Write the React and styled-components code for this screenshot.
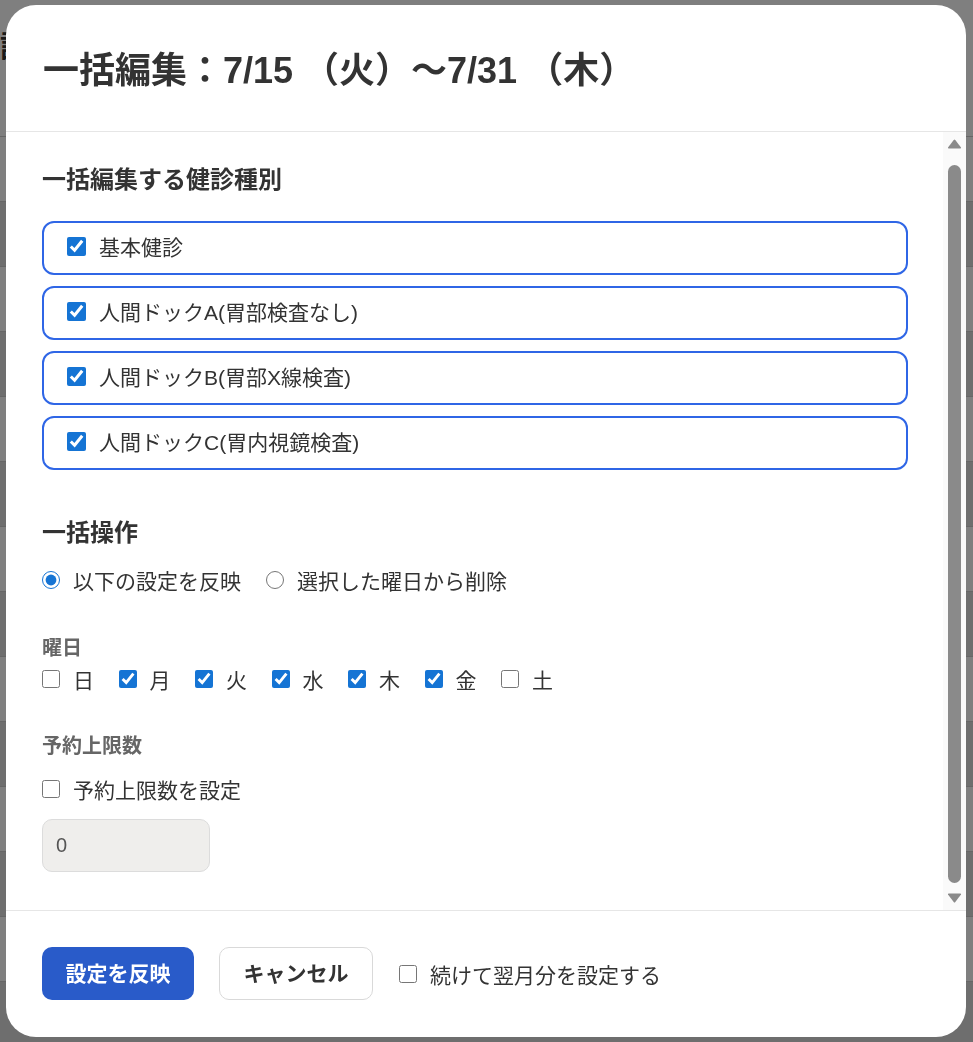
import React, { useState } from "react"
import styled, { createGlobalStyle } from "styled-components"

const GlobalStyle = createGlobalStyle`
  html, body {
    margin: 0;
    height: 100%;
  }
  body {
    font-family: "Liberation Sans", "Noto Sans CJK JP", sans-serif;
    color: #333;
    background: #fff;
  }
`

// ---- page behind the dialog ----
const BgPage = styled.div`
  padding: 22px 0 0 0;
`

const BgTitle = styled.h2`
  margin: 0 0 70px 0;
  font-size: 30px;
  font-weight: 700;
`

const BgRow = styled.div`
  display: flex;
  height: 64px;
  align-items: center;
  border-top: 1px solid #ccc;
  background: ${(p) => (p.shade ? "#dcdcdc" : "#fff")};
  font-size: 20px;
  gap: 20px;
  padding-left: 4px;
`

// ---- dialog ----
const Overlay = styled.div`
  position: fixed;
  inset: 0;
  background: rgba(0, 0, 0, 0.5);
  display: flex;
  align-items: flex-start;
  padding: 5px 7px 5px 6px;
  box-sizing: border-box;
`

const Modal = styled.div`
  width: 960px;
  height: 1032px;
  background: #fff;
  border-radius: 30px;
  display: flex;
  flex-direction: column;
  overflow: hidden;
`

const Header = styled.div`
  height: 127px;
  flex-shrink: 0;
  box-sizing: border-box;
  border-bottom: 1px solid #e6e6e6;
  display: flex;
  align-items: center;
  padding: 0 0 3px 37px;
`

const Title = styled.h1`
  margin: 0;
  font-size: 36px;
  font-weight: 700;
  color: #333;
`

const Middle = styled.div`
  flex: 1;
  min-height: 0;
  display: flex;
`

const Body = styled.div`
  flex: 1;
  overflow-y: auto;
  scrollbar-width: none;
  padding: 33px 35px 56px 36px;
`

const ScrollTrack = styled.div`
  width: 23px;
  flex-shrink: 0;
  background: #fafafa;
  display: flex;
  flex-direction: column;
  align-items: center;
  padding: 7px 0;
  box-sizing: border-box;
`

const Thumb = styled.div`
  width: 13px;
  flex: 1;
  margin: 16px 0 10px;
  border-radius: 7px;
  background: #8a8a8a;
`

const SectionTitle = styled.h3`
  margin: ${(p) => p.top || 0}px 0 0 0;
  font-size: 24px;
  line-height: 30px;
  font-weight: 700;
  color: #333;
`

const SubLabel = styled.div`
  margin-top: ${(p) => p.top || 0}px;
  font-size: 20px;
  line-height: 26px;
  font-weight: 700;
  color: #666;
`

const CardList = styled.div`
  margin-top: 26px;
  display: flex;
  flex-direction: column;
  gap: 11px;
`

const Card = styled.label`
  display: flex;
  align-items: center;
  gap: 13px;
  height: 54px;
  box-sizing: border-box;
  border: 2px solid #2f66e6;
  border-radius: 12px;
  padding: 0 0 4px 23px;
  font-size: 21px;
  color: #333;
  cursor: pointer;
`

const Check = styled.input.attrs({ type: "checkbox" })`
  margin: 0;
  width: ${(p) => p.size || 18}px;
  height: ${(p) => p.size || 18}px;
  accent-color: #1574d4;
  flex-shrink: 0;
`

const Radio = styled.input.attrs({ type: "radio" })`
  margin: 0;
  width: 18px;
  height: 18px;
  accent-color: #1574d4;
  flex-shrink: 0;
`

const OptionRow = styled.div`
  margin-top: ${(p) => p.top || 0}px;
  display: flex;
  align-items: center;
  gap: ${(p) => p.gap || 25}px;
  height: ${(p) => p.h || 30}px;
`

const Option = styled.label`
  display: flex;
  align-items: center;
  gap: 13px;
  font-size: 21px;
  color: #333;
  cursor: pointer;
`

const LimitInput = styled.input`
  display: block;
  margin-top: 15px;
  width: 168px;
  height: 53px;
  box-sizing: border-box;
  border: 1px solid #dcdcdc;
  border-radius: 10px;
  background: #efeeec;
  padding: 0 13px;
  font-family: inherit;
  font-size: 20px;
  color: #555;
  outline: none;
`

const Footer = styled.div`
  height: 127px;
  flex-shrink: 0;
  box-sizing: border-box;
  border-top: 1px solid #e6e6e6;
  display: flex;
  align-items: flex-start;
  padding: 36px 0 0 36px;
  gap: 25px;
`

const Button = styled.button`
  height: 53px;
  width: ${(p) => p.w}px;
  border-radius: 10px;
  font-family: inherit;
  font-size: 21px;
  font-weight: 700;
  padding: 0 0 3px;
  cursor: pointer;
  border: ${(p) => (p.primary ? "none" : "1px solid #d9d9d9")};
  background: ${(p) => (p.primary ? "#295bc9" : "#fff")};
  color: ${(p) => (p.primary ? "#fff" : "#333")};
`

const FooterCheck = styled(Option)`
  height: 53px;
  margin-left: 1px;
  padding-bottom: 3px;
`

const Arrow = ({ down }) => (
  <svg width="15" height="10" viewBox="0 0 15 10">
    <path
      d={down ? "M1 1.5 Q0.5 0.5 2 0.5 H13 Q14.5 0.5 14 1.5 L8.3 9 Q7.5 10 6.7 9 Z" : "M1 8.5 Q0.5 9.5 2 9.5 H13 Q14.5 9.5 14 8.5 L8.3 1 Q7.5 0 6.7 1 Z"}
      fill="#8a8a8a"
    />
  </svg>
)

const courses = [
  "基本健診",
  "人間ドックA(胃部検査なし)",
  "人間ドックB(胃部X線検査)",
  "人間ドックC(胃内視鏡検査)",
]

const weekdays = [
  { d: "日", on: false },
  { d: "月", on: true },
  { d: "火", on: true },
  { d: "水", on: true },
  { d: "木", on: true },
  { d: "金", on: true },
  { d: "土", on: false },
]

const App = () => {
  const [mode, setMode] = useState("apply")
  const [days, setDays] = useState(weekdays.map((w) => w.on))

  const toggleDay = (i) => {
    const next = [...days]
    next[i] = !next[i]
    setDays(next)
  }

  return (
    <>
      <GlobalStyle />
      <BgPage>
        <BgTitle>請求設定</BgTitle>
        {Array.from({ length: 14 }).map((_, i) => (
          <BgRow key={i} shade={i % 2 === 1}>
            <span>{i % 2 ? "（すべてにチェー）" : "ソ"}</span>
            <span>人間ドックA(胃部検査なし)（すべてにチェー）</span>
          </BgRow>
        ))}
      </BgPage>

      <Overlay>
        <Modal>
          <Header>
            <Title>一括編集：7/15 （火）～7/31 （木）</Title>
          </Header>

          <Middle>
            <Body>
              <SectionTitle>一括編集する健診種別</SectionTitle>
              <CardList>
                {courses.map((c) => (
                  <Card key={c}>
                    <Check size={19} defaultChecked />
                    {c}
                  </Card>
                ))}
              </CardList>

              <SectionTitle top={48}>一括操作</SectionTitle>
              <OptionRow top={17}>
                <Option>
                  <Radio name="mode" checked={mode === "apply"} onChange={() => setMode("apply")} />
                  以下の設定を反映
                </Option>
                <Option>
                  <Radio name="mode" checked={mode === "delete"} onChange={() => setMode("delete")} />
                  選択した曜日から削除
                </Option>
              </OptionRow>

              <SubLabel top={40}>曜日</SubLabel>
              <OptionRow top={4} h={28} gap={24.5}>
                {weekdays.map((w, i) => (
                  <Option key={w.d}>
                    <Check checked={days[i]} onChange={() => toggleDay(i)} />
                    {w.d}
                  </Option>
                ))}
              </OptionRow>

              <SubLabel top={40}>予約上限数</SubLabel>
              <OptionRow top={15}>
                <Option>
                  <Check />
                  予約上限数を設定
                </Option>
              </OptionRow>
              <LimitInput defaultValue="0" disabled />
            </Body>
            <ScrollTrack>
              <Arrow />
              <Thumb />
              <Arrow down />
            </ScrollTrack>
          </Middle>

          <Footer>
            <Button primary w={152}>設定を反映</Button>
            <Button w={154}>キャンセル</Button>
            <FooterCheck>
              <Check />
              続けて翌月分を設定する
            </FooterCheck>
          </Footer>
        </Modal>
      </Overlay>
    </>
  )
}

export default App
